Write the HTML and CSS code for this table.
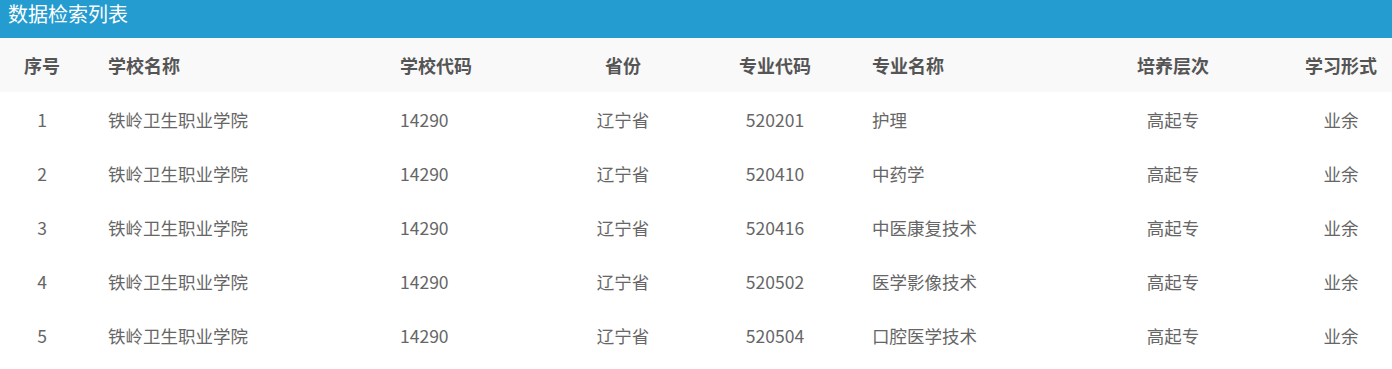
FILE: index.html
```html
<!DOCTYPE html>
<html lang="zh-CN">
<head>
<meta charset="utf-8">
<title>数据检索列表</title>
<link rel="stylesheet" href="styles.css">
</head>
<body>
<div class="panel">
  <div class="panel-title">数据检索列表</div>
  <table class="data-table">
    <colgroup>
      <col class="c-no"><col class="c-school"><col class="c-code"><col class="c-prov">
      <col class="c-mcode"><col class="c-major"><col class="c-level"><col class="c-form">
    </colgroup>
    <thead>
      <tr>
        <th class="center">序号</th>
        <th class="left">学校名称</th>
        <th class="left">学校代码</th>
        <th class="center">省份</th>
        <th class="center">专业代码</th>
        <th class="left">专业名称</th>
        <th class="center">培养层次</th>
        <th class="center">学习形式</th>
      </tr>
    </thead>
    <tbody>
      <tr><td class="center">1</td><td class="left">铁岭卫生职业学院</td><td class="left">14290</td><td class="center">辽宁省</td><td class="center">520201</td><td class="left">护理</td><td class="center">高起专</td><td class="center">业余</td></tr>
      <tr><td class="center">2</td><td class="left">铁岭卫生职业学院</td><td class="left">14290</td><td class="center">辽宁省</td><td class="center">520410</td><td class="left">中药学</td><td class="center">高起专</td><td class="center">业余</td></tr>
      <tr><td class="center">3</td><td class="left">铁岭卫生职业学院</td><td class="left">14290</td><td class="center">辽宁省</td><td class="center">520416</td><td class="left">中医康复技术</td><td class="center">高起专</td><td class="center">业余</td></tr>
      <tr><td class="center">4</td><td class="left">铁岭卫生职业学院</td><td class="left">14290</td><td class="center">辽宁省</td><td class="center">520502</td><td class="left">医学影像技术</td><td class="center">高起专</td><td class="center">业余</td></tr>
      <tr><td class="center">5</td><td class="left">铁岭卫生职业学院</td><td class="left">14290</td><td class="center">辽宁省</td><td class="center">520504</td><td class="left">口腔医学技术</td><td class="center">高起专</td><td class="center">业余</td></tr>
    </tbody>
  </table>
</div>
</body>
</html>
```

FILE: styles.css
```css
html, body {
  margin: 0;
  padding: 0;
  background: #ffffff;
}
body {
  font-family: "Noto Sans CJK SC", "Noto Sans", sans-serif;
  color: #666666;
}
.panel {
  width: 1392px;
}
.panel-title {
  height: 38px;
  box-sizing: border-box;
  background: #259ccf;
  color: #ffffff;
  font-size: 20px;
  line-height: 26px;
  padding: 1px 0 0 8px;
}
.data-table {
  width: 1392px;
  border-collapse: collapse;
  table-layout: fixed;
  font-size: 18px;
}
.c-no { width: 84px; }
.c-school { width: 292px; }
.c-code { width: 170px; }
.c-prov { width: 154px; }
.c-mcode { width: 150px; }
.c-major { width: 206px; }
.c-level { width: 234px; }
.c-form { width: 102px; }
.data-table th,
.data-table td {
  height: 54px;
  padding: 0;
  vertical-align: middle;
  white-space: nowrap;
}
.data-table thead tr {
  background: #f9f9f9;
}
.data-table th {
  font-weight: bold;
  color: #555555;
}
.data-table td {
  color: #666666;
  font-size: 17.5px;
}
.data-table .center {
  text-align: center;
}
.data-table .left {
  text-align: left;
  padding-left: 24px;
}
.data-table td.left:nth-child(6),
.data-table th.left:nth-child(6) {
  padding-left: 22px;
}
```
